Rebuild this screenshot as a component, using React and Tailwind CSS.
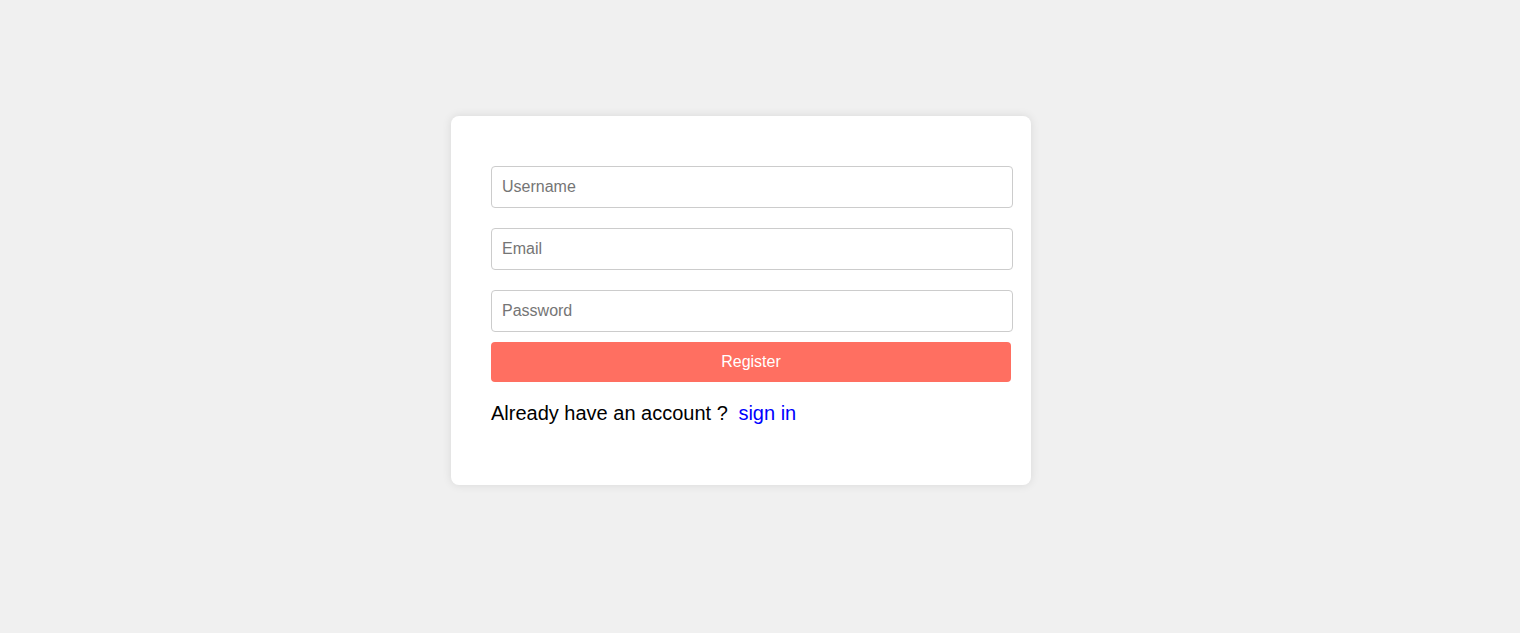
export default function App() {
  const font = { fontFamily: '"Liberation Sans", Arial, sans-serif' };
  return (
    <div className="min-h-[633px] w-full bg-[#f0f0f0] overflow-hidden" style={font}>
      <div className="ml-[451px] mt-[116px] w-[580px] box-border rounded-[8px] bg-white shadow-[0_0_10px_rgba(0,0,0,0.1)] px-[40px] pt-[50px] pb-[60px]">
        <div className="flex flex-col">
          <input
            type="text"
            placeholder="Username"
            className="box-content w-[500px] h-[20px] px-[10px] py-[10px] border border-[#ccc] rounded-[4px] text-[16px] text-black placeholder:text-[#757575] outline-none"
          />
          <input
            type="email"
            placeholder="Email"
            className="mt-[20px] box-content w-[500px] h-[20px] px-[10px] py-[10px] border border-[#ccc] rounded-[4px] text-[16px] text-black placeholder:text-[#757575] outline-none"
          />
          <input
            type="password"
            placeholder="Password"
            className="mt-[20px] box-content w-[500px] h-[20px] px-[10px] py-[10px] border border-[#ccc] rounded-[4px] text-[16px] text-black placeholder:text-[#757575] outline-none"
          />
          <button className="mt-[10px] w-[520px] h-[40px] rounded-[4px] bg-[#ff6f61] text-white text-[16px]">
            Register
          </button>
          <p className="mt-[20px] text-[20px] leading-[23px] text-black">
            Already have an account ?{" "}
            <a href="#" className="ml-[5px] text-[#0000ff]">sign in</a>
          </p>
        </div>
      </div>
    </div>
  );
}
